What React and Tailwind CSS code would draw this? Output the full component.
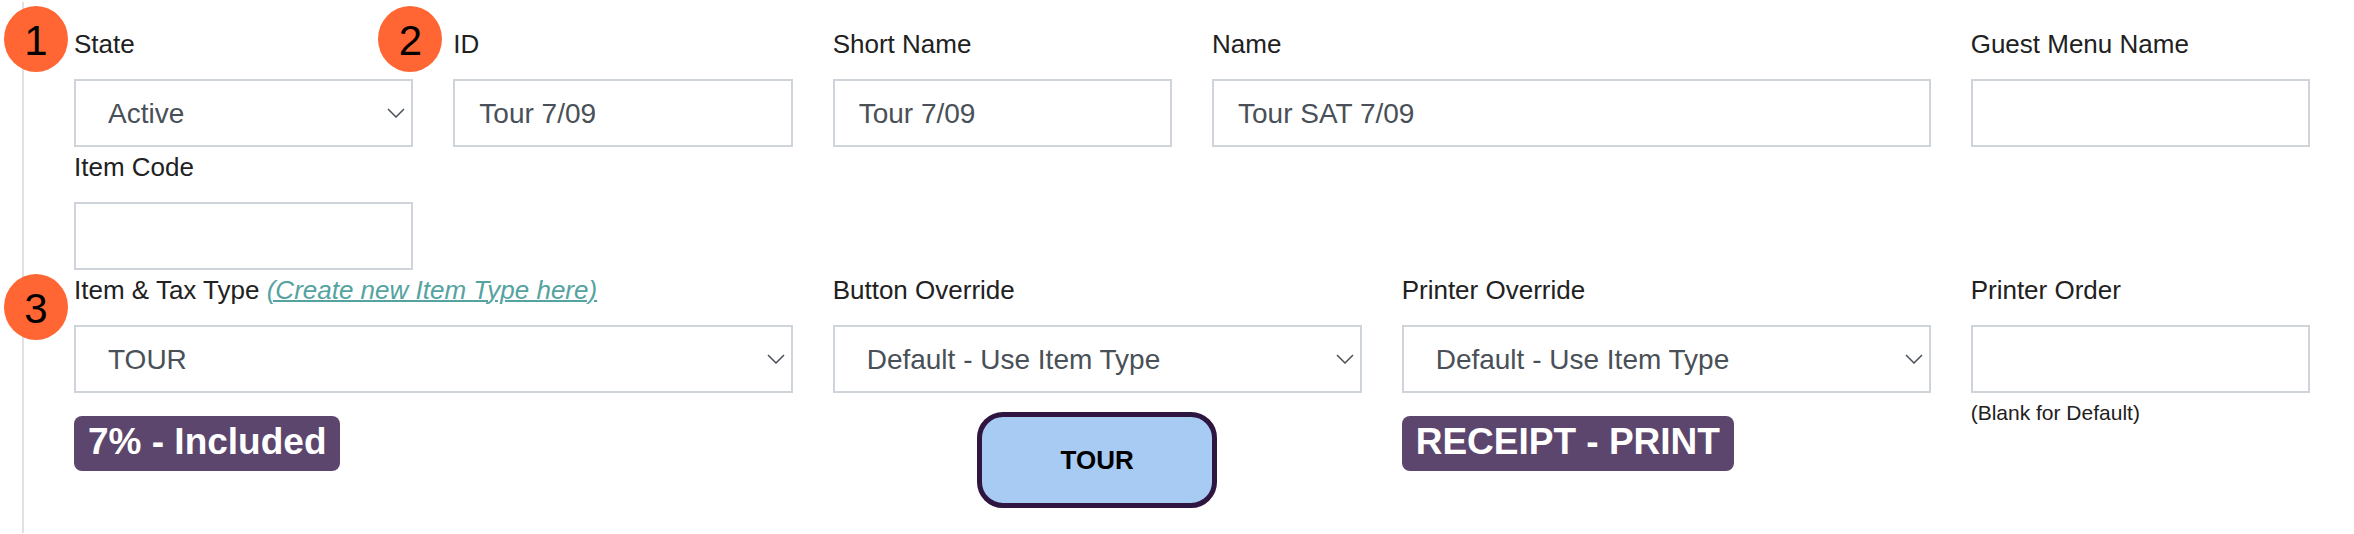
import React, { useState } from 'react';

const controlClass =
  'block w-full h-[68px] border-2 border-[#ced4da] bg-white pt-[2px] text-[28px] leading-[42px] text-[#495057] outline-none rounded-none';

function Field({ id, label, extra, step, stepClass, className, children }) {
  return (
    <div className={`relative ${className}`}>
      {step && (
        <span
          className={`absolute flex h-[66px] w-16 items-center justify-center rounded-[50%] bg-[#ff6633] pt-1 text-[42px] leading-none text-black ${stepClass}`}
        >
          {step}
        </span>
      )}
      <div className="mb-[15px] pt-px text-[26px] leading-[39px]">
        <label htmlFor={id}>{label}</label>
        {extra}
      </div>
      {children}
    </div>
  );
}

function TextInput({ id, defaultValue = '' }) {
  return (
    <input id={id} name={id} type="text" defaultValue={defaultValue} className={`${controlClass} px-6`} />
  );
}

function Select({ id, options }) {
  const [value, setValue] = useState(options[0]);

  return (
    <div className="relative">
      <select
        id={id}
        name={id}
        value={value}
        onChange={(e) => setValue(e.target.value)}
        className={`${controlClass} appearance-none pl-8 pr-10`}
      >
        {options.map((option) => (
          <option key={option} value={option}>
            {option}
          </option>
        ))}
      </select>
      <svg
        viewBox="0 0 18 10"
        className="pointer-events-none absolute right-2 top-1/2 h-[10px] w-[18px] -translate-y-1/2"
        fill="none"
        stroke="#495057"
        strokeWidth="1.5"
        aria-hidden="true"
      >
        <path d="M1 1l8 8 8-8" />
      </svg>
    </div>
  );
}

function Badge({ children }) {
  return (
    <span className="mt-[23px] inline-block rounded-lg bg-[#5c466d] px-[14px] pb-[3px] text-[37px] font-bold leading-[52px] text-white">
      {children}
    </span>
  );
}

export default function App() {
  return (
    <div className="bg-white pt-[2px] font-['Liberation_Sans',Arial,sans-serif] text-[#212121]">
      <form
        onSubmit={(e) => e.preventDefault()}
        className="ml-[22px] border-l-2 border-[#e1e1e3] pb-[25px] pl-[50px] pr-11 pt-[22px]"
      >
        <div className="grid grid-cols-12 gap-x-10">
          <Field id="state" label="State" step="1" stepClass="-left-[70px] -top-[18px]" className="col-span-2">
            <Select id="state" options={['Active', 'Inactive']} />
          </Field>
          <Field id="item-id" label="ID" step="2" stepClass="-left-[75px] -top-[18px]" className="col-span-2">
            <TextInput id="item-id" defaultValue="Tour 7/09" />
          </Field>
          <Field id="short-name" label="Short Name" className="col-span-2">
            <TextInput id="short-name" defaultValue="Tour 7/09" />
          </Field>
          <Field id="name" label="Name" className="col-span-4">
            <TextInput id="name" defaultValue="Tour SAT 7/09" />
          </Field>
          <Field id="guest-menu-name" label="Guest Menu Name" className="col-span-2">
            <TextInput id="guest-menu-name" />
          </Field>
          <Field id="item-code" label="Item Code" className="col-span-2">
            <TextInput id="item-code" />
          </Field>
        </div>

        <div className="grid grid-cols-12 gap-x-10">
          <Field
            id="item-type"
            label="Item & Tax Type"
            extra={
              <>
                {' '}
                <a href="#new-item-type" className="italic text-[#54a3a1] underline decoration-2">
                  (Create new Item Type here)
                </a>
              </>
            }
            step="3"
            stepClass="-left-[70px] top-1"
            className="col-span-4"
          >
            <Select id="item-type" options={['TOUR']} />
            <Badge>7% - Included</Badge>
          </Field>
          <Field id="button-override" label="Button Override" className="col-span-3">
            <Select id="button-override" options={['Default - Use Item Type']} />
            <button
              type="button"
              className="mx-auto mt-[19px] block h-24 w-60 rounded-[26px] border-[5px] border-[#2f1640] bg-[#a8cbf4] text-[26px] font-bold text-black"
            >
              TOUR
            </button>
          </Field>
          <Field id="printer-override" label="Printer Override" className="col-span-3">
            <Select id="printer-override" options={['Default - Use Item Type']} />
            <Badge>RECEIPT - PRINT</Badge>
          </Field>
          <Field id="printer-order" label="Printer Order" className="col-span-2">
            <TextInput id="printer-order" />
            <p className="mt-1 text-[21px] leading-8">(Blank for Default)</p>
          </Field>
        </div>
      </form>
    </div>
  );
}
